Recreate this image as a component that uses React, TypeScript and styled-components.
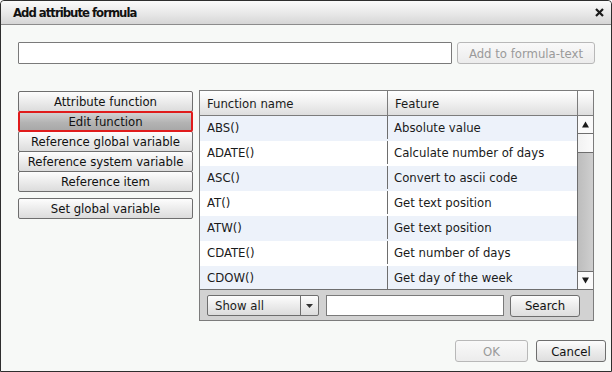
import styled, { createGlobalStyle } from 'styled-components';

const GlobalStyle = createGlobalStyle`
    html, body {
        margin: 0;
        padding: 0;
        background: #ffffff;
    }
    * {
        box-sizing: border-box;
    }
`;

const FONT = `"DejaVu Sans Condensed", "DejaVu Sans", "Liberation Sans", sans-serif`;

const rows = [
    { name: 'ABS()', feature: 'Absolute value' },
    { name: 'ADATE()', feature: 'Calculate number of days' },
    { name: 'ASC()', feature: 'Convert to ascii code' },
    { name: 'AT()', feature: 'Get text position' },
    { name: 'ATW()', feature: 'Get text position' },
    { name: 'CDATE()', feature: 'Get number of days' },
    { name: 'CDOW()', feature: 'Get day of the week' },
];

const menu = [
    'Attribute function',
    'Edit function',
    'Reference global variable',
    'Reference system variable',
    'Reference item',
];

const App = () => {
    const active = 'Edit function';

    return (
        <>
            <GlobalStyle />
            <Dialog>
                <TitleBar>
                    <Title>Add attribute formula</Title>
                    <CloseButton>
                        <svg width="9" height="9" viewBox="0 0 9 9">
                            <path d="M1 1 L8 8 M8 1 L1 8" stroke="#1a1a1a" strokeWidth="2.2" />
                        </svg>
                    </CloseButton>
                </TitleBar>
                <Body>
                    <FormulaRow>
                        <FormulaInput />
                        <Button disabled width={138}>
                            Add to formula-text
                        </Button>
                    </FormulaRow>
                    <Main>
                        <Sidebar>
                            <MenuGroup>
                                {menu.map((m) => (
                                    <MenuButton key={m} isActive={m === active}>
                                        {m}
                                    </MenuButton>
                                ))}
                            </MenuGroup>
                            <MenuButton isActive={false}>Set global variable</MenuButton>
                        </Sidebar>
                        <TablePanel>
                            <HeaderRow>
                                <HeaderCell>Function name</HeaderCell>
                                <HeaderCell>Feature</HeaderCell>
                                <HeaderCell />
                            </HeaderRow>
                            <TableBody>
                                <Rows>
                                    {rows.map((r, i) => (
                                        <Row key={r.name} odd={i % 2 === 0}>
                                            <Cell>{r.name}</Cell>
                                            <Cell>{r.feature}</Cell>
                                        </Row>
                                    ))}
                                </Rows>
                                <Scrollbar>
                                    <ScrollArrow>
                                        <svg width="7" height="7" viewBox="0 0 7 7">
                                            <path d="M3.5 0.5 L7 6.5 L0 6.5 Z" fill="#1a1a1a" />
                                        </svg>
                                    </ScrollArrow>
                                    <Thumb />
                                    <Track />
                                    <ScrollArrow>
                                        <svg width="7" height="7" viewBox="0 0 7 7">
                                            <path d="M0 0.5 L7 0.5 L3.5 6.5 Z" fill="#1a1a1a" />
                                        </svg>
                                    </ScrollArrow>
                                </Scrollbar>
                            </TableBody>
                            <Toolbar>
                                <Select>
                                    <SelectLabel>Show all</SelectLabel>
                                    <SelectArrow>
                                        <svg width="7" height="4" viewBox="0 0 7 4">
                                            <path d="M0 0 L7 0 L3.5 4 Z" fill="#333" />
                                        </svg>
                                    </SelectArrow>
                                </Select>
                                <SearchInput />
                                <Button width={70}>Search</Button>
                            </Toolbar>
                        </TablePanel>
                    </Main>
                    <Footer>
                        <Button disabled width={73}>
                            OK
                        </Button>
                        <Button width={70}>Cancel</Button>
                    </Footer>
                </Body>
            </Dialog>
        </>
    );
};

const Dialog = styled.div`
    display: flex;
    flex-direction: column;
    width: 612px;
    height: 372px;
    border: 1px solid #2e2e2e;
    border-radius: 4px 4px 0 0;
    background: #f7f9f7;
    font-family: ${FONT};
    font-size: 13px;
    color: #1a1a1a;
    overflow: hidden;
`;

const TitleBar = styled.div`
    display: flex;
    align-items: center;
    justify-content: space-between;
    height: 24px;
    padding: 0 7px 0 12px;
    background: linear-gradient(#fbfbfb, #e6e6e6 60%, #d6d6d6);
    border-bottom: 1px solid #8c8c8c;
    border-radius: 3px 3px 0 0;
`;

const Title = styled.span`
    font-size: 13px;
    font-weight: bold;
    letter-spacing: -1px;
    color: #111;
`;

const CloseButton = styled.span`
    display: flex;
    align-items: center;
`;

const Body = styled.div`
    display: flex;
    flex-direction: column;
    flex: 1;
    padding: 17px 5px 9px 17px;
`;

const FormulaRow = styled.div`
    display: flex;
    gap: 5px;
    height: 22px;
`;

const FormulaInput = styled.div`
    width: 434px;
    height: 22px;
    background: #fff;
    border: 1px solid #7a7a7a;
    border-radius: 1px;
`;

const Button = styled.div<{ width: number; disabled?: boolean }>`
    display: flex;
    align-items: center;
    justify-content: center;
    width: ${(p) => p.width}px;
    height: 22px;
    border: 1px solid ${(p) => (p.disabled ? '#b8b8b8' : '#6e6e6e')};
    border-radius: 3px;
    background: ${(p) => (p.disabled ? 'linear-gradient(#f9f9f9, #ececec)' : 'linear-gradient(#fdfdfd, #ececec 50%, #dedede)')};
    color: ${(p) => (p.disabled ? '#9a9a9a' : '#111')};
    font-size: 13px;
`;

const Main = styled.div`
    display: flex;
    gap: 6px;
    margin-top: 26px;
    margin-right: 12px;
`;

const Sidebar = styled.div`
    display: flex;
    flex-direction: column;
    gap: 7px;
    width: 175px;
    padding-top: 1px;
`;

const MenuGroup = styled.div`
    display: flex;
    flex-direction: column;
`;

const MenuButton = styled.div<{ isActive: boolean }>`
    display: flex;
    align-items: center;
    justify-content: center;
    height: 21px;
    margin-bottom: -1px;
    border: ${(p) => (p.isActive ? '2px solid #e01c1c' : '1px solid #6e6e6e')};
    border-radius: 2px;
    background: ${(p) =>
        p.isActive ? 'linear-gradient(#d2d2d2, #b4b4b4 55%, #a8a8a8)' : 'linear-gradient(#fdfdfd, #ececec 50%, #dcdcdc)'};
    position: relative;
    z-index: ${(p) => (p.isActive ? 1 : 0)};
    color: #111;
    white-space: nowrap;
`;

const TablePanel = styled.div`
    display: flex;
    flex-direction: column;
    width: 395px;
    height: 231px;
    border: 1px solid #7c7c7c;
    background: #d2d2d2;
`;

const HeaderRow = styled.div`
    display: grid;
    grid-template-columns: 188px 190px 1fr;
    height: 25px;
    border-bottom: 1px solid #7c7c7c;
    background: linear-gradient(#ffffff, #f0f0f0 50%, #dedede);
`;

const HeaderCell = styled.div`
    display: flex;
    align-items: center;
    padding-left: 7px;
    border-right: 1px solid #7c7c7c;
    &:last-child {
        border-right: none;
    }
`;

const TableBody = styled.div`
    display: flex;
    height: 174px;
    border-bottom: 1px solid #6e6e6e;
    overflow: hidden;
`;

const Rows = styled.div`
    display: flex;
    flex-direction: column;
    width: 378px;
    border-right: 1px solid #6e6e6e;
    background: #fff;
`;

const Row = styled.div<{ odd: boolean }>`
    display: grid;
    grid-template-columns: 188px 1fr;
    flex: 0 0 25px;
    padding-bottom: 2px;
    background: ${(p) => (p.odd ? '#edf2fa' : '#ffffff')};
`;

const Cell = styled.div`
    display: flex;
    align-items: center;
    padding-left: 7px;
    border-right: 1px solid #6e6e6e;
    &:last-child {
        border-right: none;
        padding-left: 6px;
    }
`;

const Scrollbar = styled.div`
    display: flex;
    flex-direction: column;
    flex: 1;
    background: #c6c6c6;
`;

const ScrollArrow = styled.div`
    display: flex;
    align-items: center;
    justify-content: center;
    height: 18px;
    background: #fafafa;
    border-bottom: 1px solid #6e6e6e;
    &:last-child {
        border-bottom: none;
        border-top: 1px solid #6e6e6e;
    }
`;

const Thumb = styled.div`
    height: 19px;
    background: linear-gradient(90deg, #f2f2f2, #fbfbfb);
    border-bottom: 1px solid #6e6e6e;
`;

const Track = styled.div`
    flex: 1;
    background: linear-gradient(90deg, #bdbdbd, #cfcfcf);
`;

const Toolbar = styled.div`
    display: flex;
    align-items: center;
    gap: 7px;
    flex: 1;
    padding: 1px 0 0 7px;
    background: #d2d2d2;
`;

const Select = styled.div`
    display: flex;
    width: 112px;
    height: 21px;
    border: 1px solid #6e6e6e;
    border-radius: 2px;
    background: linear-gradient(#fdfdfd, #ececec 50%, #dcdcdc);
`;

const SelectLabel = styled.div`
    display: flex;
    align-items: center;
    flex: 1;
    padding-left: 7px;
    border-right: 1px solid #6e6e6e;
`;

const SelectArrow = styled.div`
    display: flex;
    align-items: center;
    justify-content: center;
    width: 17px;
`;

const SearchInput = styled.div`
    width: 178px;
    height: 21px;
    margin-right: -1px;
    background: #fff;
    border: 1px solid #7a7a7a;
`;

const Footer = styled.div`
    display: flex;
    justify-content: flex-end;
    gap: 8px;
    margin-top: auto;
`;

export default App;
